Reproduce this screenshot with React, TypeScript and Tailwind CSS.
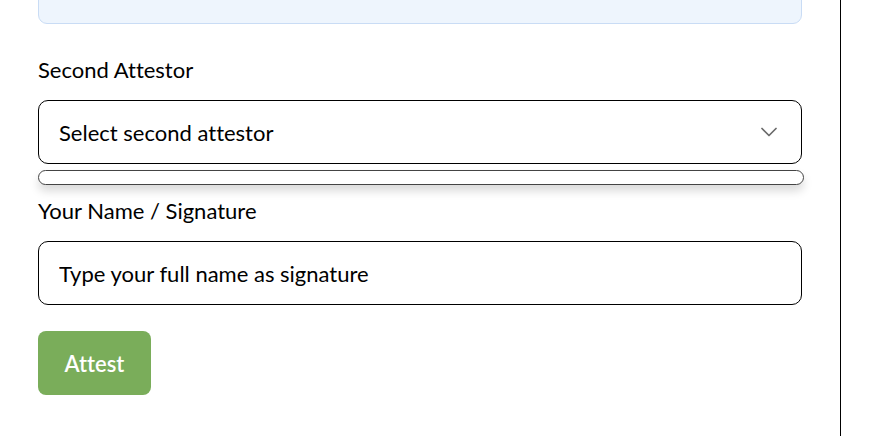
import React from 'react'
import { ChevronDown } from 'lucide-react'

const App = () => {
  return (
    <div className="w-[872px] h-[436px] overflow-hidden bg-white [font-variant-ligatures:none]" style={{ fontFamily: 'Lato, "Open Sans", sans-serif' }}>
      <div className="flow-root w-[841px] h-full border-r border-black px-[38px] text-black">
        {/* info box, cut off at the top */}
        <div className="-mt-[56px] h-[80px] rounded-[9px] border border-[#c9dcf5] bg-[#eef5fd]" />

        <div className="mt-8">
          <label className="block text-[22px] leading-[28px]">Second Attestor</label>
          <div className="relative mt-4">
            <button className="flex h-16 w-full items-center justify-between rounded-[10px] border border-black bg-white pl-5 pr-[18px] text-left text-[22px] [font-variant-ligatures:none]">
              <span>Select second attestor</span>
              <ChevronDown size={28} strokeWidth={1.5} className="text-[#6b6b6b]" />
            </button>
            {/* empty dropdown list */}
            <div className="absolute left-0 top-[70px] h-[15px] w-[766px] rounded-full border border-[#444444] bg-white shadow-[0_6px_10px_rgba(0,0,0,0.15)]" />
          </div>
        </div>

        <div className="mt-[33px]">
          <label className="block text-[22px] leading-[28px]">Your Name / Signature</label>
          <input
            className="mt-4 block h-16 w-full rounded-[10px] border border-black bg-white px-5 text-[22px] outline-none placeholder:text-black [font-variant-ligatures:none]"
            placeholder="Type your full name as signature"
          />
        </div>

        <button className="mt-[26px] h-16 w-[113px] rounded-[8px] bg-[#7aad5a] text-[22px] font-semibold text-white [font-variant-ligatures:none]">
          Attest
        </button>
      </div>
    </div>
  )
}

export default App
